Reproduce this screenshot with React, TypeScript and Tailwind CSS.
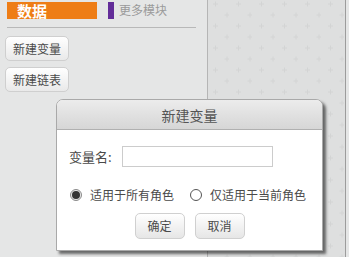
const FONT = "font-['Noto_Sans_CJK_SC','Noto_Sans',sans-serif]";

function PaletteButton({ label }: { label: string }) {
  return (
    <button className="flex h-[25px] w-[64px] items-center justify-center rounded-[5px] border border-[#cfcfcf] bg-gradient-to-b from-white to-[#e9e9e9] text-[12px] leading-none text-[#4a4a4a]">
      {label}
    </button>
  );
}

function Radio({ checked, label }: { checked: boolean; label: string }) {
  return (
    <label className="flex items-center gap-[8px]">
      {checked ? (
        <span className="flex h-[12px] w-[12px] items-center justify-center rounded-full border border-[#8a8a8a] bg-[#e8e8e8]">
          <span className="h-[8px] w-[8px] rounded-full bg-[#333]" />
        </span>
      ) : (
        <span className="h-[12px] w-[12px] rounded-full border border-[#555] bg-white" />
      )}
      <span className="text-[12px] leading-none text-[#4a4a4a]">{label}</span>
    </label>
  );
}

function DialogButton({ label }: { label: string }) {
  return (
    <button className="flex h-[26px] w-[50px] items-center justify-center rounded-[5px] border border-[#d0d0d0] bg-gradient-to-b from-white to-[#e6e6e6] text-[12px] leading-none text-[#4a4a4a]">
      {label}
    </button>
  );
}

export default function App() {
  return (
    <div className={`relative flex h-[257px] w-[349px] overflow-hidden bg-[#e5e6e6] ${FONT}`}>
      {/* palette */}
      <div className="w-[208px] shrink-0 border-r border-[#b5b5b5] bg-[#e5e6e6]">
        <div className="flex items-start pl-[7px] pt-[2px]">
          <div className="flex h-[17px] w-[90px] items-center bg-[#ee7d16] pl-[10px] text-[15px] font-bold leading-none text-white">
            数据
          </div>
          <div className="ml-[11px] h-[17px] w-[6px] bg-[#632d99]" />
          <span className="ml-[5px] pt-[2px] text-[12px] leading-none text-[#9a9a9a]">更多模块</span>
        </div>
        <div className="ml-[7px] mt-[8px] h-px w-[189px] bg-[#b8b8b8]" />
        <div className="flex flex-col gap-[6px] pl-[5px] pt-[8px]">
          <PaletteButton label="新建变量" />
          <PaletteButton label="新建链表" />
        </div>
      </div>

      {/* scripts area */}
      <div className="relative w-[138px] shrink-0 border-r border-[#9c9c9c] bg-[#dedfdf]">
        <svg className="absolute inset-0 h-full w-full" aria-hidden>
          <defs>
            <pattern id="plus" width="23" height="22" patternUnits="userSpaceOnUse" x="-2" y="-1">
              <path d="M7 5h5M9.5 2.5v5" stroke="#d3d4d4" strokeWidth="1" />
              <path d="M18.5 16h5M21 13.5v5" stroke="#d3d4d4" strokeWidth="1" />
            </pattern>
          </defs>
          <rect width="100%" height="100%" fill="url(#plus)" />
        </svg>
      </div>
      <div className="flex-1 bg-[#e5e6e6]" />

      {/* dialog */}
      <div className="absolute left-[56px] top-[99px] flex h-[152px] w-[267px] flex-col rounded-t-[7px] border border-[#a9a9a9] bg-white shadow-[3px_3px_3px_rgba(0,0,0,0.55)]">
        <div className="flex h-[30px] shrink-0 items-center justify-center rounded-t-[6px] border-b border-[#b0b0b0] bg-gradient-to-b from-[#ececec] to-[#d6d6d6] text-[14px] leading-none text-[#555]">
          新建变量
        </div>
        <div className="flex items-center pl-[12px] pt-[16px]">
          <span className="text-[13px] leading-none text-[#4a4a4a]">变量名:</span>
          <div className="ml-[10px] h-[21px] w-[151px] border border-[#cccccc] bg-white" />
        </div>
        <div className="flex items-center gap-[16px] pl-[13px] pt-[22px]">
          <Radio checked label="适用于所有角色" />
          <Radio checked={false} label="仅适用于当前角色" />
        </div>
        <div className="flex justify-center gap-[10px] pt-[12px]">
          <DialogButton label="确定" />
          <DialogButton label="取消" />
        </div>
      </div>
    </div>
  );
}
